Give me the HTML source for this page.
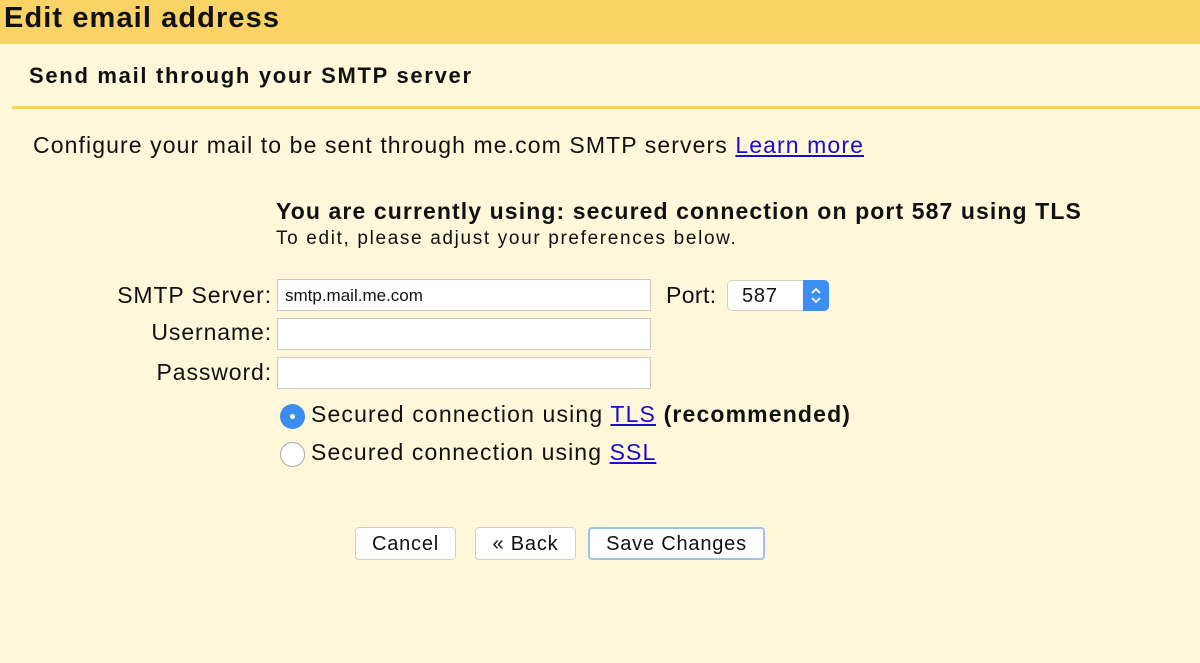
<!DOCTYPE html>
<html><head><style>
body{margin:0;width:1200px;height:663px;background:#fff7da;font-family:"Liberation Sans",Arial,sans-serif;color:#111;position:relative;overflow:hidden}
.a{position:absolute;white-space:nowrap}
.hdr{position:absolute;left:0;top:0;width:1200px;height:44px;background:#fad366}
.line{position:absolute;left:12px;top:106px;width:1188px;height:3px;background:#f9d263}
.inp{position:absolute;left:277px;width:374px;height:32px;background:#fff;border:1px solid #cfcabb;box-sizing:border-box}
.lbl{position:absolute;right:928px;font-size:23px;letter-spacing:0.9px}
a{color:#1a0dcc;text-decoration:underline}
.btn{position:absolute;top:527px;height:33px;background:#fff;border:1px solid #d6d0c0;border-radius:4px;box-sizing:border-box;font-size:20px;text-align:center;line-height:33px;letter-spacing:0.8px}
</style></head><body>
<div class="hdr"></div>
<div class="a" style="left:4px;top:2px;font-size:29px;font-weight:bold;letter-spacing:1.1px">Edit email address</div>
<div class="a" style="left:29px;top:63px;font-size:22px;font-weight:bold;letter-spacing:1.7px">Send mail through your SMTP server</div>
<div class="line"></div>
<div class="a" style="left:33px;top:132px;font-size:23px;letter-spacing:1.1px">Configure your mail to be sent through me.com SMTP servers <a>Learn more</a></div>
<div class="a" style="left:276px;top:198px;font-size:23px;font-weight:bold;letter-spacing:1.1px">You are currently using: secured connection on port 587 using TLS</div>
<div class="a" style="left:276px;top:228px;font-size:19px;letter-spacing:1.65px">To edit, please adjust your preferences below.</div>
<div class="lbl" style="top:282px">SMTP Server:</div>
<div class="lbl" style="top:319px">Username:</div>
<div class="lbl" style="top:359px">Password:</div>
<div class="inp" style="top:279px;font-size:17px;padding:6px 0 0 7px">smtp.mail.me.com</div>
<div class="inp" style="top:318px"></div>
<div class="inp" style="top:357px"></div>
<div class="a" style="left:666px;top:282px;font-size:23px;letter-spacing:0.4px">Port:</div>
<div style="position:absolute;left:727px;top:280px;width:102px;height:31px;background:#fff;border:1px solid #d4cfc2;border-radius:5px;box-sizing:border-box;font-size:20px;padding:4px 0 0 14px;letter-spacing:0.8px">587
<div style="position:absolute;right:-1px;top:-1px;width:26px;height:31px;background:#3d8ef2;border-radius:0 5px 5px 0">
<svg width="26" height="31"><path d="M9 13 L13 9 L17 13 M9 18 L13 22 L17 18" stroke="#fff" stroke-width="1.8" fill="none"/></svg></div></div>
<div style="position:absolute;left:280px;top:404px;width:25px;height:25px;border-radius:50%;background:#3b8ef0"><div style="position:absolute;left:10px;top:10px;width:5px;height:5px;border-radius:50%;background:#fff"></div></div>
<div style="position:absolute;left:280px;top:442px;width:23px;height:23px;border-radius:50%;background:#fff;border:1px solid #aaa"></div>
<div class="a" style="left:311px;top:401px;font-size:23px;letter-spacing:1.15px">Secured connection using <a>TLS</a> <b>(recommended)</b></div>
<div class="a" style="left:311px;top:439px;font-size:23px;letter-spacing:1.1px">Secured connection using <a>SSL</a></div>
<div class="btn" style="left:355px;width:101px">Cancel</div>
<div class="btn" style="left:475px;width:101px">« Back</div>
<div class="btn" style="left:588px;width:177px;border:2px solid #9cc2ee;line-height:31px">Save Changes</div>
</body></html>
